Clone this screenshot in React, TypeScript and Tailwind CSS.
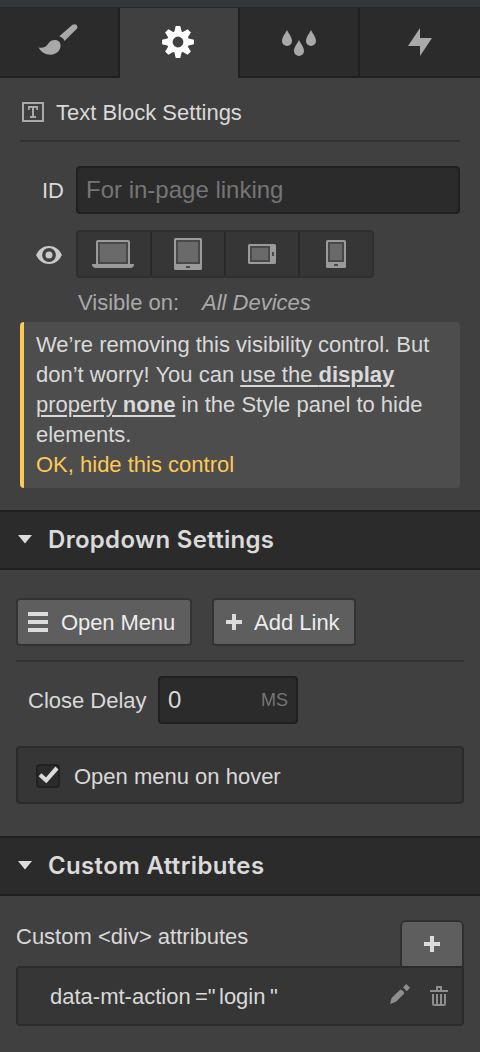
import type { ReactNode } from "react";

function Tab({ active, last, children }: { active?: boolean; last?: boolean; children: ReactNode }) {
  return (
    <button
      className={
        "flex h-[70px] w-[120px] items-center justify-center border-[#202020] " +
        (active ? "bg-[#404040] border-r-2 pr-[2px] pb-[2px]" : last ? "bg-[#2b2b2b] border-b-2" : "bg-[#2b2b2b] border-r-2 border-b-2")
      }
    >
      {children}
    </button>
  );
}

function GearIcon() {
  const teeth = [0, 45, 90, 135, 180, 225, 270, 315];
  return (
    <svg width="32" height="32" viewBox="-16 -16 32 32" fill="#fff">
      <path fillRule="evenodd" d="M0-11a11 11 0 1 0 0 22a11 11 0 1 0 0-22zM0-5.400a5.400 5.400 0 1 1 0 10.800a5.400 5.400 0 1 1 0-10.800z" />
      {teeth.map((a) => (
        <path key={a} transform={`rotate(${a})`} d="M-3.800-9.500L-2.300-15.900H2.300L3.800-9.500z" />
      ))}
    </svg>
  );
}

function PlusIcon() {
  return (
    <svg width="16" height="16" viewBox="0 0 16 16" fill="#dcdcdc" className="shrink-0">
      <path d="M6 0h4v6h6v4h-6v6H6v-6H0V6h6z" />
    </svg>
  );
}

function SectionHeader({ title, className }: { title: string; className: string }) {
  return (
    <div className="flex h-[60px] items-center border-y-2 border-[#202020] bg-[#2b2b2b] pl-[18px]">
      <svg width="14" height="9" viewBox="0 0 14 9" fill="#dcdcdc" className="mb-[2px] shrink-0">
        <path d="M0 0h14L7 8.5z" />
      </svg>
      <h2 className={"ml-4 whitespace-nowrap font-['Inter',sans-serif] text-[24px] leading-[30px] font-semibold text-[#dadada] " + className}>{title}</h2>
    </div>
  );
}

export default function App() {
  return (
    <div className="h-[1052px] w-[480px] overflow-hidden bg-[#404040] font-['Liberation_Sans',sans-serif] text-[22px] leading-[30px] text-[#d9d9d9]">
      <div className="h-2 border-b border-[#242628] bg-[#32373b]" />
      <nav className="flex">
        <Tab>
          <svg width="40" height="32" viewBox="0 0 40 32" fill="#a9a9a9" className="mr-[3px] mb-[4px]">
            <path d="M.5 23.500C6 24.300 8.600 22.300 10.300 19.400C12 16.800 14.500 15.800 17.500 16C21.500 16.500 23 19.400 22.500 22.700C21.900 27 18 30.700 12.500 30.700C7 30.700 3 28 .5 23.500z" />
            <path d="M21.300 12.200L34.500 .8C37.500-1.100 40.600 1.600 39 4.500L26.500 17C25.900 15 24 13.200 21.300 12.200z" />
          </svg>
        </Tab>
        <Tab active><GearIcon /></Tab>
        <Tab>
          <svg width="34" height="26" viewBox="0 0 34 26" fill="#a9a9a9" className="mt-[2px]">
            <path d="M5 0C7 4 10 7.300 10 11a5 5 0 0 1-10 0C0 7.300 3 4 5 0zM17 10C19 14 22 17.300 22 21a5 5 0 0 1-10 0C12 17.300 15 14 17 10zM29 0C31 4 34 7.300 34 11a5 5 0 0 1-10 0C24 7.300 27 4 29 0z" />
          </svg>
        </Tab>
        <Tab last>
          <svg width="24" height="28" viewBox="0 0 24 28" fill="#a9a9a9"><path d="M12 0v10h12L12 28V18H0z" /></svg>
        </Tab>
      </nav>

      <section className="h-[432px] px-5 pt-[19px]">
        <div className="flex h-[45px] items-start border-b-2 border-[#333]">
          <svg width="22" height="20" viewBox="0 0 22 20" className="mt-[5px] ml-[2px]" fill="#a9a9a9">
            <path fillRule="evenodd" d="M0 0h22v20H0zM2 2v16h18V2z" />
            <path d="M6 4h10v4h-1.700V6H12v8h2v2H8v-2h2V6H7.700v2H6z" />
          </svg>
          <h1 className="mt-px ml-3 whitespace-nowrap">Text Block Settings</h1>
        </div>

        <div className="mt-6 flex items-center">
          <label className="w-14 pt-[2px] pl-[22px]">ID</label>
          <input
            readOnly
            placeholder="For in-page linking"
            className="h-12 w-[384px] rounded-[4px] border-2 border-[#202020] bg-[#2b2b2b] px-2 text-[24px] outline-none placeholder:text-[#757575]"
          />
        </div>

        <div className="mt-4 flex items-center">
          <div className="w-14 pl-4">
            <svg width="26" height="18" viewBox="0 0 26 18" className="mt-[2px]">
              <path fill="#cacaca" d="M0 9C3 3 7.500 0 13 0s10 3 13 9c-3 6-7.500 9-13 9S3 15 0 9z" />
              <circle cx="13" cy="9" r="5.200" fill="#cacaca" stroke="#404040" strokeWidth="3.400" />
            </svg>
          </div>
          <div className="flex h-12 w-[298px] divide-x-2 divide-[#2a2a2a] rounded-[4px] border-2 border-[#2f2f2f] bg-[#363636]">
            <div className="flex w-[74px] items-center justify-center pr-[2px]">
              <svg width="42" height="28" viewBox="0 0 42 28">
                <path fill="#9a9a9a" d="M6 0h30a2 2 0 0 1 2 2v22h4a4 4 0 0 1-4 4H4a4 4 0 0 1-4-4h4V2a2 2 0 0 1 2-2z" />
                <path fill="#494949" d="M6 2h30v22H6z" />
                <path fill="#6a6a6a" d="M8 4h26v18H8z" />
              </svg>
            </div>
            <div className="flex w-[74px] items-center justify-center">
              <svg width="28" height="32" viewBox="0 0 28 32">
                <rect width="28" height="32" rx="1.500" fill="#9a9a9a" />
                <path fill="#494949" d="M2 2h24v24H2zM12 28h4v2h-4z" />
                <path fill="#6a6a6a" d="M4 4h20v20H4z" />
              </svg>
            </div>
            <div className="flex w-[74px] items-center justify-center">
              <svg width="28" height="20" viewBox="0 0 28 20">
                <rect width="28" height="20" rx="1.500" fill="#9a9a9a" />
                <path fill="#494949" d="M2 2h20v16H2zM24 8h2v4h-2z" />
                <path fill="#6a6a6a" d="M4 4h16v12H4z" />
              </svg>
            </div>
            <div className="flex w-[72px] items-center justify-center">
              <svg width="20" height="28" viewBox="0 0 20 28">
                <rect width="20" height="28" rx="1.500" fill="#9a9a9a" />
                <path fill="#494949" d="M2 2h16v20H2zM8 24h4v2H8z" />
                <path fill="#6a6a6a" d="M4 4h12v16H4z" />
              </svg>
            </div>
          </div>
        </div>

        <div className="mt-[10px] flex pl-[58px] text-[#a9a9a9]">
          <span className="w-[124px]">Visible on:</span>
          <em>All Devices</em>
        </div>

        <div className="mt-[4px] h-[166px] rounded-[4px] border-l-4 border-[#fec854] bg-[#4d4d4d] py-2 pl-3 whitespace-nowrap">
          <p>
            We’re removing this visibility control. But<br />
            don’t worry! You can <u className="decoration-2 underline-offset-[3px]">use the <b>display</b></u><br />
            <u className="decoration-2 underline-offset-[3px]">property <b>none</b></u> in the Style panel to hide<br />
            elements.
          </p>
          <a className="text-[#fec854]">OK, hide this control</a>
        </div>
      </section>

      <SectionHeader title="Dropdown Settings" className="tracking-[0.3px]" />
      <section className="h-[266px] px-4 pt-7">
        <div className="flex h-16 items-start gap-5 border-b-2 border-[#333]">
          <button className="flex h-12 w-44 items-center rounded-[4px] border-2 border-[#333] bg-[#5e5e5e] pl-[10px] whitespace-nowrap text-[#ececec]">
            <svg width="20" height="20" viewBox="0 0 20 20" fill="#dcdcdc" className="mr-[13px] shrink-0">
              <path d="M0 0h20v4H0zM0 8h20v4H0zM0 16h20v4H0z" />
            </svg>
            <span className="pt-[2px] tracking-[-0.1px]">Open Menu</span>
          </button>
          <button className="flex h-12 w-36 items-center rounded-[4px] border-2 border-[#333] bg-[#5e5e5e] pl-3 whitespace-nowrap text-[#ececec]">
            <span className="mr-3"><PlusIcon /></span>
            <span className="pt-[2px]">Add Link</span>
          </button>
        </div>
        <div className="mt-[14px] flex items-center">
          <label className="w-[142px] pt-[2px] pl-3 whitespace-nowrap">Close Delay</label>
          <div className="flex h-12 w-[140px] items-center justify-between rounded-[4px] border-2 border-[#202020] bg-[#2b2b2b] px-2">
            <span className="text-[24px]">0</span>
            <span className="text-[18px] text-[#757575]">MS</span>
          </div>
        </div>
        <div className="mt-[22px] flex h-[58px] items-center rounded-[4px] border-2 border-[#2b2b2b] bg-[#363636] pt-[2px] pl-[18px]">
          <div className="h-6 w-6 rounded-[4px] border-2 border-[#202020] bg-[#2b2b2b]">
            <svg width="20" height="20" viewBox="0 0 20 20" fill="none" stroke="#dadada" strokeWidth="4.200" className="overflow-visible">
              <path d="M2 8.800L8.200 14.300L19 2" />
            </svg>
          </div>
          <span className="ml-[14px] pt-[2px]">Open menu on hover</span>
        </div>
      </section>

      <SectionHeader title="Custom Attributes" className="tracking-[0.35px]" />
      <section className="px-4 pt-6">
        <div className="flex h-[46px] items-start justify-between">
          <span className="mt-[2px]">Custom &lt;div&gt; attributes</span>
          <button className="flex h-[46px] w-16 items-center justify-center rounded-t-[6px] border-2 border-b-0 border-[#2f2f2f] bg-[#5e5e5e]">
            <PlusIcon />
          </button>
        </div>
        <div className="flex h-[60px] items-center rounded-[4px] rounded-tr-none border-2 border-[#2b2b2b] bg-[#363636] pl-8">
          <span className="w-[145px] pt-[2px] whitespace-nowrap">data-mt-action</span>
          <span className="w-[24px] pt-[2px] whitespace-nowrap">="</span>
          <span className="w-[51px] pt-[2px] whitespace-nowrap">login</span>
          <span className="pt-[2px]">"</span>
          <svg width="20" height="20" viewBox="0 0 20 20" fill="#8e8e8e" className="mt-[-4px] ml-auto">
            <path d="M0 20L1.600 14L10.300 5.500Q14 6.500 14.300 9.500L6 17.700zM13 3.500L16.200 0L20 3.800L16.800 7.200z" />
          </svg>
          <svg width="18" height="20" viewBox="0 0 18 20" className="mr-[14px] ml-5" fill="none" stroke="#8e8e8e" strokeWidth="2">
            <path d="M0 5h18M7 5V1h4v4M3 8v10q0 1 1 1h10q1 0 1-1V8M7 8v11M11 8v11" />
          </svg>
        </div>
      </section>
    </div>
  );
}
